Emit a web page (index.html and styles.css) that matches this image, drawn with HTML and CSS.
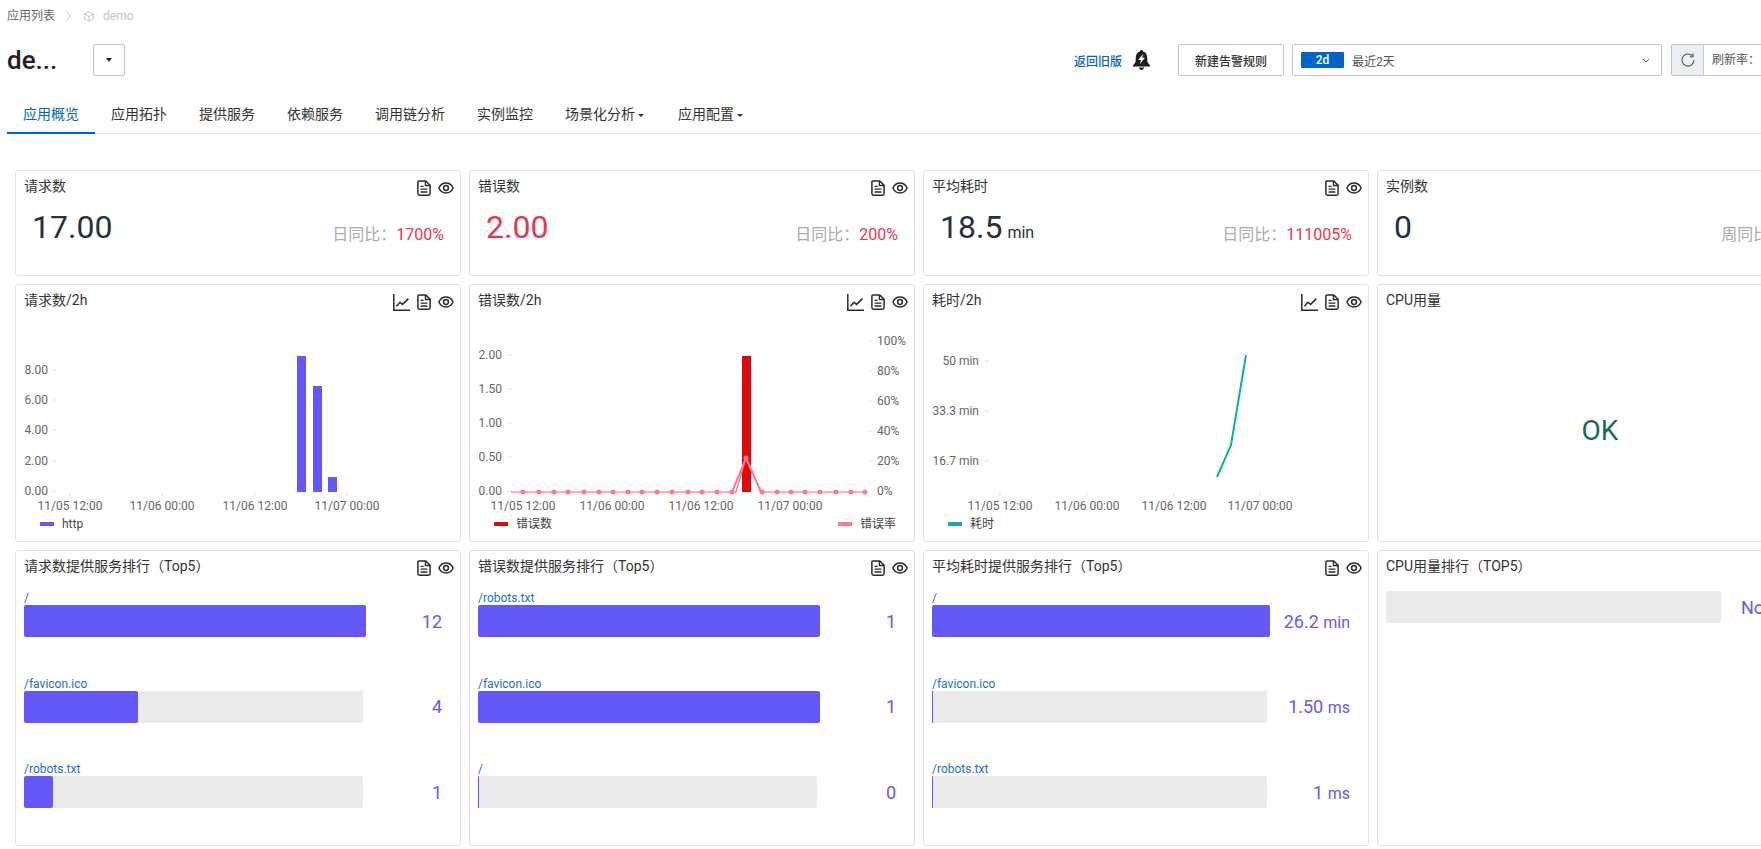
FILE: index.html
```html
<!DOCTYPE html>
<html lang="en">
<head>
    <meta charset="UTF-8">
    <meta name="viewport" content="width=device-width, initial-scale=1.0">
    <title>demo - 应用概览</title>
    <link rel="stylesheet" href="styles.css">
</head>
<body>
    <!-- Shared card icons -->
    <svg class="icon-defs" aria-hidden="true">
        <symbol id="i-doc" viewBox="0 0 14 16">
            <path d="M1.9 .9H8.6L13.1 5.3V13.6A1.6 1.6 0 0 1 11.5 15.2H2.5A1.6 1.6 0 0 1 .9 13.6V1.9A1 1 0 0 1 1.9 .9Z" fill="none" stroke="#2b2b2b" stroke-width="1.5" stroke-linejoin="round"/>
            <path d="M8.4 .9V5.5H13.1" fill="none" stroke="#2b2b2b" stroke-width="1.3"/>
            <path d="M3.6 6.4H6.6M3.6 9.2H10.4M3.6 12H10.4" stroke="#2b2b2b" stroke-width="1.3"/>
        </symbol>
        <symbol id="i-eye" viewBox="0 0 16 12">
            <path d="M.9 6C2.4 2.7 5 1 8 1S13.6 2.7 15.1 6C13.6 9.3 11 11 8 11S2.4 9.3 .9 6Z" fill="none" stroke="#2b2b2b" stroke-width="1.5"/>
            <circle cx="8" cy="6" r="2.4" fill="none" stroke="#2b2b2b" stroke-width="1.5"/>
        </symbol>
        <symbol id="i-chart" viewBox="0 0 17 17">
            <path d="M.8 0V16.2H17" fill="none" stroke="#2b2b2b" stroke-width="1.5"/>
            <path d="M3.4 12.2L7 8.2L9.6 10.4L15.4 4.6" fill="none" stroke="#2b2b2b" stroke-width="1.5"/>
        </symbol>
    </svg>

    <!-- Breadcrumb -->
    <div class="crumbs">
        <span class="crumb-link">应用列表</span>
        <svg class="crumb-sep" width="7" height="12" viewBox="0 0 7 12"><path d="M1 1L6 6L1 11" fill="none" stroke="#ccc"/></svg>
        <svg class="crumb-cube" width="10" height="11" viewBox="0 0 10 11"><path d="M5 .6L9.3 3V8L5 10.4L.7 8V3ZM.7 3L5 5.5L9.3 3M5 5.5V10.4" fill="none" stroke="#c4c4c4"/></svg>
        <span class="crumb-current">demo</span>
    </div>

    <!-- App name and toolbar -->
    <div class="head">
        <div class="app-name">
            <h1>de...</h1>
            <button class="caret-btn"><i class="caret"></i></button>
        </div>
        <div class="toolbar">
            <a class="back-link" href="#">返回旧版</a>
            <svg class="bell" width="17" height="20" viewBox="0 0 17 20">
                <path d="M8.5 0C9.4 0 10 .6 10 1.5C12.9 2.3 14.1 4.6 14.2 7.5L14.5 12.2L17 15.4V16.4H0V15.4L2.5 12.2L2.8 7.5C2.9 4.6 4.1 2.3 7 1.5C7 .6 7.6 0 8.5 0Z" fill="#1c1c1c"/>
                <path d="M10.4 3.4L5.2 10H8L6.6 14.6L11.9 7.8H9.1Z" fill="#fff"/>
                <path d="M5.8 17.5H11.2C10.9 19 9.8 20 8.5 20S6.1 19 5.8 17.5Z" fill="#1c1c1c"/>
            </svg>
            <button class="rule-btn">新建告警规则</button>
            <div class="range">
                <span class="range-tag">2d</span>
                <span class="range-label">最近2天</span>
                <svg class="range-arrow" width="8" height="5" viewBox="0 0 8 5"><path d="M1 1L4 4L7 1" fill="none" stroke="#666"/></svg>
            </div>
            <button class="refresh-btn">
                <svg width="14" height="14" viewBox="0 0 14 14"><path d="M11.6 3.2A6 6 0 1 0 13 7" fill="none" stroke="#555" stroke-width="1.1"/><path d="M12 .6V3.7H8.9" fill="none" stroke="#555" stroke-width="1.1"/></svg>
            </button>
            <div class="rate">刷新率：</div>
        </div>
    </div>

    <!-- Tabs -->
    <nav class="tabs">
        <a class="tab active" href="#">应用概览</a>
        <a class="tab" href="#">应用拓扑</a>
        <a class="tab" href="#">提供服务</a>
        <a class="tab" href="#">依赖服务</a>
        <a class="tab" href="#">调用链分析</a>
        <a class="tab" href="#">实例监控</a>
        <a class="tab" href="#">场景化分析<i class="caret small"></i></a>
        <a class="tab" href="#">应用配置<i class="caret small"></i></a>
    </nav>

    <div class="grid">
        <!-- Row 1: totals -->
        <section class="card">
            <div class="card-head"><span class="card-title">请求数</span><span class="card-icons"><svg class="i-doc"><use href="#i-doc"/></svg><svg class="i-eye"><use href="#i-eye"/></svg></span></div>
            <div class="kpi"><span class="kpi-value">17.00</span><span class="kpi-compare">日同比：<em>1700%</em></span></div>
        </section>
        <section class="card">
            <div class="card-head"><span class="card-title">错误数</span><span class="card-icons"><svg class="i-doc"><use href="#i-doc"/></svg><svg class="i-eye"><use href="#i-eye"/></svg></span></div>
            <div class="kpi"><span class="kpi-value red">2.00</span><span class="kpi-compare">日同比：<em>200%</em></span></div>
        </section>
        <section class="card">
            <div class="card-head"><span class="card-title">平均耗时</span><span class="card-icons"><svg class="i-doc"><use href="#i-doc"/></svg><svg class="i-eye"><use href="#i-eye"/></svg></span></div>
            <div class="kpi"><span class="kpi-value">18.5<small>min</small></span><span class="kpi-compare">日同比：<em>111005%</em></span></div>
        </section>
        <section class="card">
            <div class="card-head"><span class="card-title">实例数</span></div>
            <div class="kpi"><span class="kpi-value">0</span><span class="kpi-compare">周同比：<em>0%</em></span></div>
        </section>

        <!-- Row 2: charts, viewBox uses page coordinates -->
        <section class="card">
            <div class="card-head"><span class="card-title">请求数/2h</span><span class="card-icons"><svg class="i-chart"><use href="#i-chart"/></svg><svg class="i-doc"><use href="#i-doc"/></svg><svg class="i-eye"><use href="#i-eye"/></svg></span></div>
            <svg class="chart" viewBox="16 319 444 222">
                <g class="tick">
                    <path d="M53 370H57M53 400H57M53 430H57M53 461H57M53 491H57M70 492V496M162 492V496M255 492V496M347 492V496"/>
                </g>
                <g class="axis-end">
                    <text x="48" y="374">8.00</text>
                    <text x="48" y="404">6.00</text>
                    <text x="48" y="434">4.00</text>
                    <text x="48" y="465">2.00</text>
                    <text x="48" y="495">0.00</text>
                </g>
                <g class="axis-mid">
                    <text x="70" y="510">11/05 12:00</text>
                    <text x="162" y="510">11/06 00:00</text>
                    <text x="255" y="510">11/06 12:00</text>
                    <text x="347" y="510">11/07 00:00</text>
                </g>
                <rect x="297" y="356" width="9" height="136" fill="#6558f8"/>
                <rect x="313" y="386" width="9" height="106" fill="#6558f8"/>
                <rect x="328" y="477" width="9" height="15" fill="#6558f8"/>
                <rect x="40" y="522" width="14" height="4" fill="#6558f8"/>
                <text class="legend" x="62" y="528">http</text>
            </svg>
        </section>
        <section class="card">
            <div class="card-head"><span class="card-title">错误数/2h</span><span class="card-icons"><svg class="i-chart"><use href="#i-chart"/></svg><svg class="i-doc"><use href="#i-doc"/></svg><svg class="i-eye"><use href="#i-eye"/></svg></span></div>
            <svg class="chart" viewBox="470 319 444 222">
                <g class="tick">
                    <path d="M507 355H512M507 389H512M507 423H512M507 457H512M507 491H512M868 341H872M868 371H872M868 401H872M868 431H872M868 461H872"/>
                </g>
                <g class="axis-end">
                    <text x="502" y="359">2.00</text>
                    <text x="502" y="393">1.50</text>
                    <text x="502" y="427">1.00</text>
                    <text x="502" y="461">0.50</text>
                    <text x="502" y="495">0.00</text>
                </g>
                <g class="axis">
                    <text x="877" y="345">100%</text>
                    <text x="877" y="375">80%</text>
                    <text x="877" y="405">60%</text>
                    <text x="877" y="435">40%</text>
                    <text x="877" y="465">20%</text>
                    <text x="877" y="495">0%</text>
                </g>
                <g class="axis-mid">
                    <text x="523" y="510">11/05 12:00</text>
                    <text x="612" y="510">11/06 00:00</text>
                    <text x="701" y="510">11/06 12:00</text>
                    <text x="790" y="510">11/07 00:00</text>
                </g>
                <rect x="742" y="356" width="9" height="136" fill="#dc0a0a"/>
                <path d="M511 492H736L746 458L761 492H866" fill="none" stroke="#f4697a" stroke-width="1.2"/>
                <path d="M732 492L746 458L761 492" fill="none" stroke="#fd7c8b" stroke-width="2"/>
                <g fill="#fd7c8b">
                    <circle cx="523" cy="492" r="2.5"/><circle cx="539" cy="492" r="2.5"/><circle cx="554" cy="492" r="2.5"/>
                    <circle cx="568" cy="492" r="2.5"/><circle cx="584" cy="492" r="2.5"/><circle cx="599" cy="492" r="2.5"/>
                    <circle cx="613" cy="492" r="2.5"/><circle cx="628" cy="492" r="2.5"/><circle cx="642" cy="492" r="2.5"/>
                    <circle cx="657" cy="492" r="2.5"/><circle cx="672" cy="492" r="2.5"/><circle cx="688" cy="492" r="2.5"/>
                    <circle cx="702" cy="492" r="2.5"/><circle cx="717" cy="492" r="2.5"/><circle cx="732" cy="492" r="2.5"/>
                    <circle cx="746" cy="458" r="2.5"/><circle cx="762" cy="492" r="2.5"/><circle cx="777" cy="492" r="2.5"/>
                    <circle cx="791" cy="492" r="2.5"/><circle cx="805" cy="492" r="2.5"/><circle cx="820" cy="492" r="2.5"/>
                    <circle cx="836" cy="492" r="2.5"/><circle cx="851" cy="492" r="2.5"/><circle cx="865" cy="492" r="2.5"/>
                </g>
                <rect x="494" y="522" width="14" height="4" fill="#dc0a0a"/>
                <text class="legend" x="516" y="528">错误数</text>
                <rect x="838" y="522" width="14" height="4" fill="#fd7c8b"/>
                <text class="legend" x="860" y="528">错误率</text>
            </svg>
        </section>
        <section class="card">
            <div class="card-head"><span class="card-title">耗时/2h</span><span class="card-icons"><svg class="i-chart"><use href="#i-chart"/></svg><svg class="i-doc"><use href="#i-doc"/></svg><svg class="i-eye"><use href="#i-eye"/></svg></span></div>
            <svg class="chart" viewBox="924 319 444 222">
                <g class="tick">
                    <path d="M985 361H989M985 411H989M985 461H989M1000 492V496M1087 492V496M1174 492V496M1260 492V496"/>
                </g>
                <g class="axis-end">
                    <text x="979" y="365">50 min</text>
                    <text x="979" y="415">33.3 min</text>
                    <text x="979" y="465">16.7 min</text>
                </g>
                <g class="axis-mid">
                    <text x="1000" y="510">11/05 12:00</text>
                    <text x="1087" y="510">11/06 00:00</text>
                    <text x="1174" y="510">11/06 12:00</text>
                    <text x="1260" y="510">11/07 00:00</text>
                </g>
                <path d="M1217 477L1231 445L1246 355" fill="none" stroke="#0fb09f" stroke-width="2"/>
                <rect x="948" y="522" width="14" height="4" fill="#0fb09f"/>
                <text class="legend" x="970" y="528">耗时</text>
            </svg>
        </section>
        <section class="card">
            <div class="card-head"><span class="card-title">CPU用量</span></div>
            <div class="status-ok">OK</div>
        </section>

        <!-- Row 3: top 5 rankings -->
        <section class="card">
            <div class="card-head"><span class="card-title">请求数提供服务排行（Top5）</span><span class="card-icons"><svg class="i-doc"><use href="#i-doc"/></svg><svg class="i-eye"><use href="#i-eye"/></svg></span></div>
            <div class="rank">
                <div class="rank-item"><a class="rank-label" href="#">/</a><div class="rank-row"><div class="track"><div class="fill" style="width:100.9%"></div></div><span class="rank-value">12</span></div></div>
                <div class="rank-item"><a class="rank-label" href="#">/favicon.ico</a><div class="rank-row"><div class="track"><div class="fill" style="width:33.6%"></div></div><span class="rank-value">4</span></div></div>
                <div class="rank-item"><a class="rank-label" href="#">/robots.txt</a><div class="rank-row"><div class="track"><div class="fill" style="width:8.6%"></div></div><span class="rank-value">1</span></div></div>
            </div>
        </section>
        <section class="card">
            <div class="card-head"><span class="card-title">错误数提供服务排行（Top5）</span><span class="card-icons"><svg class="i-doc"><use href="#i-doc"/></svg><svg class="i-eye"><use href="#i-eye"/></svg></span></div>
            <div class="rank">
                <div class="rank-item"><a class="rank-label" href="#">/robots.txt</a><div class="rank-row"><div class="track"><div class="fill" style="width:100.9%"></div></div><span class="rank-value">1</span></div></div>
                <div class="rank-item"><a class="rank-label" href="#">/favicon.ico</a><div class="rank-row"><div class="track"><div class="fill" style="width:100.9%"></div></div><span class="rank-value">1</span></div></div>
                <div class="rank-item"><a class="rank-label" href="#">/</a><div class="rank-row"><div class="track"><div class="fill" style="width:1px"></div></div><span class="rank-value">0</span></div></div>
            </div>
        </section>
        <section class="card">
            <div class="card-head"><span class="card-title">平均耗时提供服务排行（Top5）</span><span class="card-icons"><svg class="i-doc"><use href="#i-doc"/></svg><svg class="i-eye"><use href="#i-eye"/></svg></span></div>
            <div class="rank rank-wide">
                <div class="rank-item"><a class="rank-label" href="#">/</a><div class="rank-row"><div class="track"><div class="fill" style="width:100.9%"></div></div><span class="rank-value">26.2 <small>min</small></span></div></div>
                <div class="rank-item"><a class="rank-label" href="#">/favicon.ico</a><div class="rank-row"><div class="track"><div class="fill" style="width:1px"></div></div><span class="rank-value">1.50 <small>ms</small></span></div></div>
                <div class="rank-item"><a class="rank-label" href="#">/robots.txt</a><div class="rank-row"><div class="track"><div class="fill" style="width:1px"></div></div><span class="rank-value">1 <small>ms</small></span></div></div>
            </div>
        </section>
        <section class="card">
            <div class="card-head"><span class="card-title">CPU用量排行（TOP5）</span></div>
            <div class="rank rank-wide">
                <div class="rank-row"><div class="track"></div><span class="rank-nodata">No data</span></div>
            </div>
        </section>
    </div>
</body>
</html>
```

FILE: styles.css
```css
html, body {
    height: 849px;
    overflow: hidden;
}

body {
    margin: 0;
    width: 1761px;
    background-color: #fff;
    color: #333;
    font-family: Roboto, "Noto Sans CJK SC", sans-serif;
    font-size: 14px;
}

a {
    text-decoration: none;
}

button {
    font-family: inherit;
    cursor: pointer;
}

.icon-defs {
    display: block;
    width: 0;
    height: 0;
}

.caret {
    display: block;
    width: 0;
    height: 0;
    border-left: 3.5px solid transparent;
    border-right: 3.5px solid transparent;
    border-top: 4px solid #222;
}

.caret.small {
    display: inline-block;
    margin: 0 2px 0 3px;
    vertical-align: middle;
    border-left-width: 3px;
    border-right-width: 3px;
    border-top-width: 3px;
    border-top-color: #333;
}

/* Breadcrumb */
.crumbs {
    display: flex;
    align-items: center;
    height: 16px;
    padding: 8px 0 0 7px;
    font-size: 12px;
    line-height: 16px;
}

.crumb-link {
    color: #666;
}

.crumb-sep {
    margin-left: 10px;
}

.crumb-cube {
    margin-left: 12px;
}

.crumb-current {
    margin-left: 9px;
    color: #c4c4c4;
}

/* App name and toolbar */
.head {
    display: flex;
    justify-content: space-between;
    width: 1823px;
    height: 32px;
    margin: 20px 0 0 7px;
}

.app-name {
    display: flex;
    align-items: center;
}

.app-name h1 {
    width: 86px;
    margin: 0;
    color: #222;
    font-size: 26px;
    font-weight: 500;
    line-height: 32px;
}

.caret-btn {
    display: flex;
    align-items: center;
    justify-content: center;
    box-sizing: border-box;
    width: 32px;
    height: 32px;
    padding: 0;
    background-color: #fff;
    border: 1px solid #c0c6cc;
    border-radius: 2px;
}

.toolbar {
    display: flex;
    align-items: center;
    font-size: 12px;
}

.back-link {
    width: 49px;
    color: #0064c8;
    font-weight: 500;
    white-space: nowrap;
}

.bell {
    margin: 0 28px 0 10px;
}

.rule-btn {
    box-sizing: border-box;
    width: 106px;
    height: 32px;
    padding: 0;
    background-color: #fff;
    border: 1px solid #c0c6cc;
    border-radius: 2px;
    color: #333;
    font-size: 12px;
    font-weight: 500;
}

.range {
    display: flex;
    align-items: center;
    box-sizing: border-box;
    width: 370px;
    height: 32px;
    margin-left: 8px;
    padding: 0 11px 0 8px;
    border: 1px solid #c0c6cc;
    border-radius: 2px;
}

.range-tag {
    width: 43px;
    height: 16px;
    background-color: #0064c8;
    border-radius: 1px;
    color: #fff;
    font-weight: 500;
    line-height: 16px;
    text-align: center;
}

.range-label {
    margin-left: 8px;
    color: #555;
}

.range-arrow {
    margin-left: auto;
}

.refresh-btn {
    display: flex;
    align-items: center;
    justify-content: center;
    box-sizing: border-box;
    width: 33px;
    height: 32px;
    margin-left: 9px;
    padding: 0;
    background-color: #ebeef3;
    border: 1px solid #c0c6cc;
    border-radius: 2px 0 0 2px;
}

.rate {
    box-sizing: border-box;
    width: 126px;
    height: 32px;
    padding-left: 8px;
    border: 1px solid #c0c6cc;
    border-left: none;
    color: #555;
    line-height: 30px;
}

/* Tabs */
.tabs {
    display: flex;
    height: 38px;
    margin: 20px 0 0 7px;
    box-shadow: inset 0 -1px 0 #e3e3e3;
}

.tab {
    padding: 0 16px;
    color: #333;
    line-height: 36px;
}

.tab.active {
    color: #0064c8;
    box-shadow: inset 0 -2px 0 #0064c8;
}

/* Cards */
.grid {
    display: grid;
    grid-template-columns: repeat(4, 446px);
    grid-template-rows: 106px 258px 296px;
    gap: 8px;
    margin: 36px 0 0 15px;
}

.card {
    box-sizing: border-box;
    background-color: #fff;
    border: 1px solid #e2e2e2;
    border-radius: 3px;
}

.card-head {
    display: flex;
    align-items: center;
    justify-content: space-between;
    height: 34px;
    padding: 0 6px 0 8px;
    color: #333;
    font-size: 14px;
}

.card-title {
    margin-bottom: 6px;
}

.card-icons {
    display: flex;
    align-items: center;
    gap: 7px;
}

.i-doc {
    width: 14px;
    height: 16px;
}

.i-eye {
    width: 16px;
    height: 12px;
}

.i-chart {
    width: 17px;
    height: 17px;
}

/* Totals */
.kpi {
    display: flex;
    align-items: flex-start;
    justify-content: space-between;
    padding: 2px 16px 0 16px;
}

.kpi-value {
    color: #27313a;
    font-size: 32px;
    line-height: 40px;
}

.kpi-value.red {
    color: #e5394d;
}

.kpi-value small {
    margin-left: 5px;
    font-size: 16px;
}

.kpi-compare {
    margin-top: 16px;
    color: #aaa;
    font-size: 16px;
    line-height: 24px;
}

.kpi-compare em {
    color: #e5394d;
    font-style: normal;
}

.status-ok {
    padding-top: 96px;
    color: #1d6a50;
    font-size: 28px;
    line-height: 32px;
    text-align: center;
}

/* Charts */
.chart {
    display: block;
    width: 444px;
    height: 222px;
    font-size: 12px;
}

.chart text {
    fill: #666;
}

.chart .legend {
    fill: #444;
}

.tick path {
    fill: none;
    stroke: #e4e4e4;
}

.axis-end text {
    text-anchor: end;
}

.axis-mid text {
    text-anchor: middle;
}

/* Rankings */
.rank {
    display: flex;
    flex-direction: column;
    gap: 39.5px;
    padding: 6px 0 0 8px;
}

.rank-label {
    display: block;
    color: #1b6fc9;
    font-size: 12px;
    line-height: 14px;
}

.rank-row {
    display: flex;
    align-items: center;
}

.track {
    width: 339px;
    height: 32px;
    background-color: #eaeaea;
    border-radius: 2px;
}

.rank-wide .track {
    width: 335px;
}

.fill {
    height: 100%;
    background-color: #6558f8;
    border-radius: 2px;
}

.rank-value {
    width: 79px;
    color: #6558f8;
    font-size: 18px;
    text-align: right;
}

.rank-wide .rank-value {
    width: 83px;
}

.rank-value small {
    font-size: 16px;
}

.rank-nodata {
    margin-left: 20px;
    color: #6558f8;
    font-size: 18px;
    white-space: nowrap;
}
```
